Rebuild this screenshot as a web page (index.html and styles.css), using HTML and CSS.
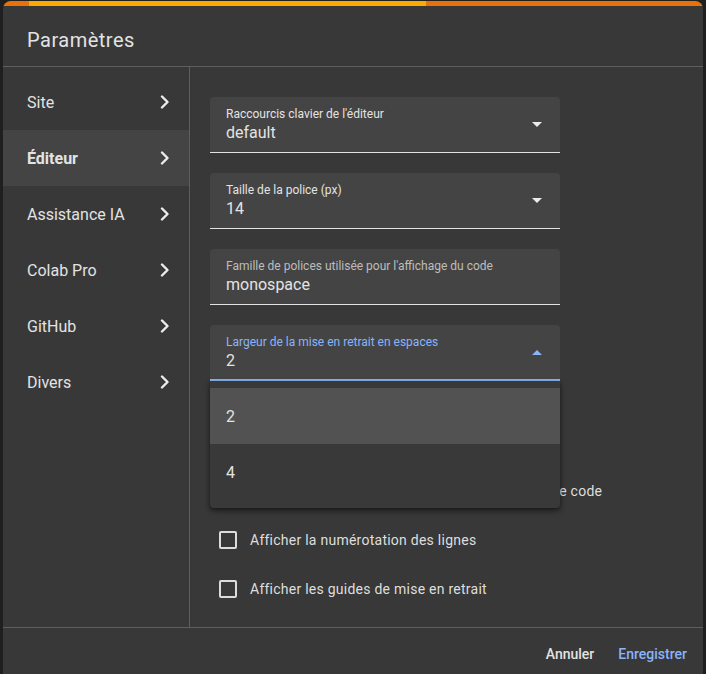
FILE: index.html
```html
<!DOCTYPE html>
<html lang="fr">
<head>
<meta charset="utf-8">
<link rel="stylesheet" href="styles.css">
</head>
<body>
<div class="dialog">
  <div class="accent"></div>
  <div class="header"><h1 class="title">Paramètres</h1></div>
  <div class="main">
    <nav class="sidebar">
      <div class="nav-item"><span>Site</span><svg class="chev" viewBox="0 0 10 14" width="10" height="14"><path d="M2 1.5 L7.5 7 L2 12.5" /></svg></div>
      <div class="nav-item active"><span>Éditeur</span><svg class="chev" viewBox="0 0 10 14" width="10" height="14"><path d="M2 1.5 L7.5 7 L2 12.5" /></svg></div>
      <div class="nav-item"><span>Assistance IA</span><svg class="chev" viewBox="0 0 10 14" width="10" height="14"><path d="M2 1.5 L7.5 7 L2 12.5" /></svg></div>
      <div class="nav-item"><span>Colab Pro</span><svg class="chev" viewBox="0 0 10 14" width="10" height="14"><path d="M2 1.5 L7.5 7 L2 12.5" /></svg></div>
      <div class="nav-item"><span>GitHub</span><svg class="chev" viewBox="0 0 10 14" width="10" height="14"><path d="M2 1.5 L7.5 7 L2 12.5" /></svg></div>
      <div class="nav-item"><span>Divers</span><svg class="chev" viewBox="0 0 10 14" width="10" height="14"><path d="M2 1.5 L7.5 7 L2 12.5" /></svg></div>
    </nav>
    <section class="content">
      <div class="fields">
        <div class="field">
          <div class="field-text"><div class="label">Raccourcis clavier de l'éditeur</div><div class="value">default</div></div>
          <span class="arrow down"></span>
        </div>
        <div class="field">
          <div class="field-text"><div class="label">Taille de la police (px)</div><div class="value">14</div></div>
          <span class="arrow down"></span>
        </div>
        <div class="field">
          <div class="field-text"><div class="label">Famille de polices utilisée pour l'affichage du code</div><div class="value">monospace</div></div>
        </div>
        <div class="field focused">
          <div class="field-text"><div class="label">Largeur de la mise en retrait en espaces</div><div class="value">2</div></div>
          <span class="arrow up"></span>
          <div class="menu">
            <div class="menu-item selected">2</div>
            <div class="menu-item">4</div>
          </div>
        </div>
      </div>
      <div class="checks">
        <label class="check"><span class="box"></span><span>Détection automatique de la mise en retrait</span></label>
        <label class="check"><span class="box"></span><span>Activer la mise en surbrillance des motifs dans le code</span></label>
        <label class="check"><span class="box"></span><span>Afficher la numérotation des lignes</span></label>
        <label class="check"><span class="box"></span><span>Afficher les guides de mise en retrait</span></label>
      </div>
    </section>
  </div>
  <div class="footer">
    <button class="btn">Annuler</button>
    <button class="btn primary">Enregistrer</button>
  </div>
</div>
</body>
</html>
```
FILE: styles.css
```css
html, body {
  margin: 0;
  padding: 0;
  background: #1f1f1f;
  font-family: Roboto, "Liberation Sans", sans-serif;
  color: #e3e3e3;
  overflow: hidden;
}

.dialog {
  margin: 1px 0 0 3px;
  width: 700px;
  height: 673px;
  background: #383838;
  border-radius: 8px 8px 0 0;
  overflow: hidden;
  display: flex;
  flex-direction: column;
}

.accent {
  height: 5px;
  flex: none;
  background: linear-gradient(to right, #e8710a 0, #e8710a 26px, #f9ab00 26px, #f9ab00 423px, #e8710a 423px);
}

.header {
  height: 52px;
  flex: none;
  border-bottom: 1px solid #5e5e5e;
  display: flex;
  align-items: center;
  padding: 8px 0 0 24px;
}

.title {
  margin: 0;
  font-size: 20px;
  font-weight: 400;
  color: #e3e3e3;
  letter-spacing: 0.5px;
}

.main {
  flex: none;
  height: 560px;
  display: flex;
}

.sidebar {
  width: 186px;
  flex: none;
  border-right: 1px solid #5e5e5e;
  padding-top: 7px;
}

.nav-item {
  height: 56px;
  display: flex;
  align-items: center;
  justify-content: space-between;
  padding: 0 19px 0 24px;
  font-size: 16px;
  color: #e3e3e3;
}

.nav-item.active {
  background: #444444;
  font-weight: 700;
}

.chev path {
  fill: none;
  stroke: #ececec;
  stroke-width: 2.4;
  stroke-linecap: round;
  stroke-linejoin: round;
}

.content {
  flex: 1;
  padding: 30px 0 0 20px;
  position: relative;
}

.fields {
  width: 350px;
  display: flex;
  flex-direction: column;
  gap: 20px;
}

.field {
  position: relative;
  height: 55px;
  background: #444444;
  border-radius: 4px 4px 0 0;
  border-bottom: 1px solid #e3e3e3;
  display: flex;
  align-items: flex-start;
  justify-content: space-between;
  padding: 0 18px 0 16px;
}

.field.focused {
  height: 54px;
  border-bottom: 2px solid #8ab4f8;
}

.field-text {
  padding-top: 10px;
}

.label {
  font-size: 12px;
  line-height: 14px;
  color: #e3e3e3;
}

.field:nth-child(3) .label {
  color: #bdbdbd;
}

.field.focused .label {
  color: #8ab4f8;
}

.value {
  font-size: 16px;
  line-height: 20px;
  margin-top: 2px;
  color: #e3e3e3;
}

.arrow {
  width: 0;
  height: 0;
  border-left: 5px solid transparent;
  border-right: 5px solid transparent;
  margin-top: 25px;
}

.arrow.down {
  border-top: 5px solid #ececec;
}

.arrow.up {
  border-bottom: 5px solid #8ab4f8;
}

.menu {
  position: absolute;
  top: 56px;
  left: 0;
  width: 350px;
  padding: 7px 0 8px;
  background: #393939;
  border-radius: 0 0 4px 4px;
  box-shadow: 0 3px 6px rgba(0, 0, 0, 0.45), 0 1px 3px rgba(0, 0, 0, 0.3);
  z-index: 5;
}

.menu-item {
  height: 56px;
  display: flex;
  align-items: center;
  padding-left: 16px;
  font-size: 16px;
  color: #e3e3e3;
}

.menu-item.selected {
  background: #525252;
}

.checks {
  margin-top: 36px;
  display: flex;
  flex-direction: column;
}

.check {
  height: 49px;
  display: flex;
  align-items: center;
  gap: 13px;
  padding-left: 9px;
  font-size: 14px;
  letter-spacing: 0.25px;
  color: #dedede;
}

.box {
  width: 14px;
  height: 14px;
  border: 2px solid #dcdcdc;
  border-radius: 2px;
  flex: none;
}

.footer {
  flex: 1;
  border-top: 1px solid #5e5e5e;
  display: flex;
  align-items: center;
  justify-content: flex-end;
  gap: 8px;
  padding: 5px 8px 0 0;
}

.btn {
  background: none;
  border: none;
  font-family: Roboto, "Liberation Sans", sans-serif;
  font-size: 14px;
  font-weight: 500;
  color: #e3e3e3;
  padding: 8px 8px;
  letter-spacing: 0;
}

.btn.primary {
  color: #8ab4f8;
}
```
